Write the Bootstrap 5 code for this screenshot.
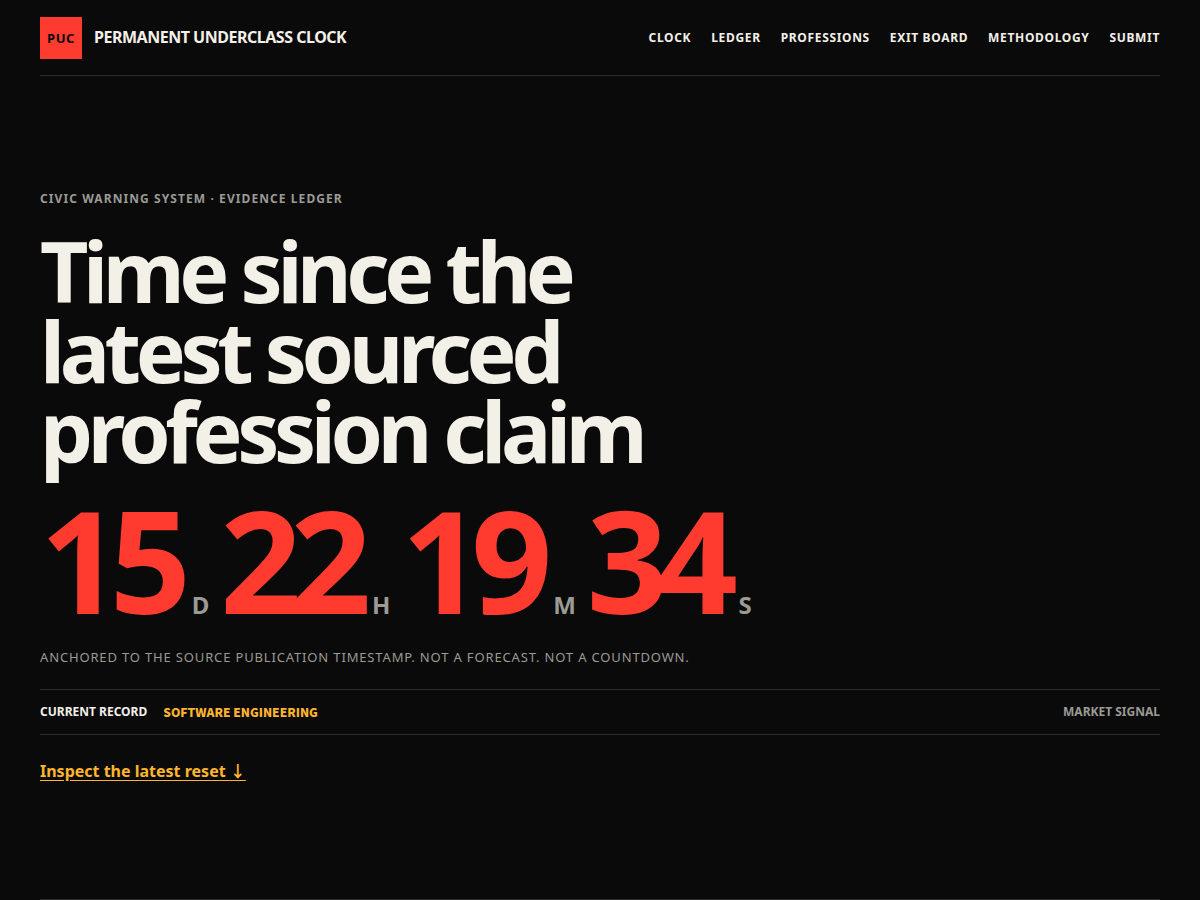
<!DOCTYPE html>
<html lang="en">
<head>
<meta charset="utf-8">
<meta name="viewport" content="width=device-width, initial-scale=1">
<title>Permanent Underclass Clock</title>
<link href="https://cdn.jsdelivr.net/npm/bootstrap@5.3.0/dist/css/bootstrap.min.css" rel="stylesheet">
<style>
  :root { --ink: #0a0a0a; --paper: #f3f0e8; --muted-ink: #9b9a94; --signal: #ff3b30; --amber: #ffb52e; --rule: #2b2b2b; }
  body { background: var(--ink); color: var(--paper); font-family: "Noto Sans", sans-serif; }
  a { color: inherit; }
  .page-shell { padding: 0 40px; min-height: 100vh; }
  .rule-bottom { border-bottom: 1px solid var(--rule); }
  .rule-top { border-top: 1px solid var(--rule); }
  .site-header { padding: 17px 0 16px; }
  .logo-box { width: 42px; height: 42px; background: var(--signal); color: var(--ink); font-size: 13px; line-height: 20px; letter-spacing: 0.04em; }
  .brand-name { font-size: 16px; line-height: 22px; letter-spacing: -0.03em; padding-bottom: 2px; }
  .site-nav { font-size: 12px; letter-spacing: 0.055em; gap: 4px 20px; }
  .hero { padding: 40px 0 42px; }
  .eyebrow { font-size: 12px; line-height: 18px; letter-spacing: 0.09em; color: var(--muted-ink); margin-bottom: 23px; }
  .hero-title { font-size: 84px; line-height: 80px; letter-spacing: -0.064em; max-width: 720px; margin-bottom: 28px; }
  .clock { font-size: 142px; line-height: 120px; letter-spacing: -0.08em; color: var(--signal); gap: 0 11px; margin-bottom: 28px; }
  .clock small { font-size: 24px; line-height: 24px; letter-spacing: 0; color: var(--muted-ink); margin-left: 12px; }
  .clock-note { font-size: 13px; line-height: 20px; letter-spacing: 0.065em; color: var(--muted-ink); margin-bottom: 22px; }
  .record { font-size: 12px; line-height: 18px; padding: 13px 0; gap: 4px 16px; }
  .record-link { color: var(--amber); font-family: "Noto Sans CJK JP", sans-serif; font-weight: 900; }
  .signal-kind { color: var(--muted-ink); }
  .reset-link { color: var(--amber); font-size: 16px; line-height: 24px; text-underline-offset: 3px; margin-top: 23px; }
  .arrow { font-family: "Noto Sans CJK JP", sans-serif; }
</style>
</head>
<body>
<div class="page-shell d-flex flex-column">
  <header class="site-header rule-bottom d-flex flex-wrap align-items-center justify-content-between gap-2">
    <a class="d-flex align-items-center text-decoration-none fw-bold" href="#clock">
      <span class="logo-box d-flex align-items-center justify-content-center me-2">PUC</span>
      <span class="brand-name ms-1">PERMANENT UNDERCLASS CLOCK</span>
    </a>
    <nav class="site-nav d-flex flex-wrap fw-bold" aria-label="Main">
      <a class="text-decoration-none" href="#clock">CLOCK</a>
      <a class="text-decoration-none" href="#ledger">LEDGER</a>
      <a class="text-decoration-none" href="#professions">PROFESSIONS</a>
      <a class="text-decoration-none" href="#exit-board">EXIT BOARD</a>
      <a class="text-decoration-none" href="#methodology">METHODOLOGY</a>
      <a class="text-decoration-none" href="#submit">SUBMIT</a>
    </nav>
  </header>
  <main class="hero rule-bottom flex-grow-1 d-flex flex-column justify-content-center" id="clock">
    <p class="eyebrow fw-bold">CIVIC WARNING SYSTEM · EVIDENCE LEDGER</p>
    <h1 class="hero-title fw-bold">Time since the latest sourced profession claim</h1>
    <div class="clock fw-bold d-flex flex-wrap" role="timer">
      <span>15<small class="fw-bold">D</small></span>
      <span>22<small class="fw-bold">H</small></span>
      <span>19<small class="fw-bold">M</small></span>
      <span>34<small class="fw-bold">S</small></span>
    </div>
    <p class="clock-note">ANCHORED TO THE SOURCE PUBLICATION TIMESTAMP. NOT A FORECAST. NOT A COUNTDOWN.</p>
    <div class="record rule-top rule-bottom d-flex flex-wrap fw-bold">
      <span>CURRENT RECORD</span>
      <a class="record-link text-decoration-none" href="#software-engineering">SOFTWARE ENGINEERING</a>
      <span class="signal-kind ms-auto">MARKET SIGNAL</span>
    </div>
    <a class="reset-link fw-bold align-self-start" href="#ledger">Inspect the latest reset <span class="arrow">↓</span></a>
  </main>
</div>
<script src="https://cdn.jsdelivr.net/npm/bootstrap@5.3.0/dist/js/bootstrap.bundle.min.js"></script>
</body>
</html>
